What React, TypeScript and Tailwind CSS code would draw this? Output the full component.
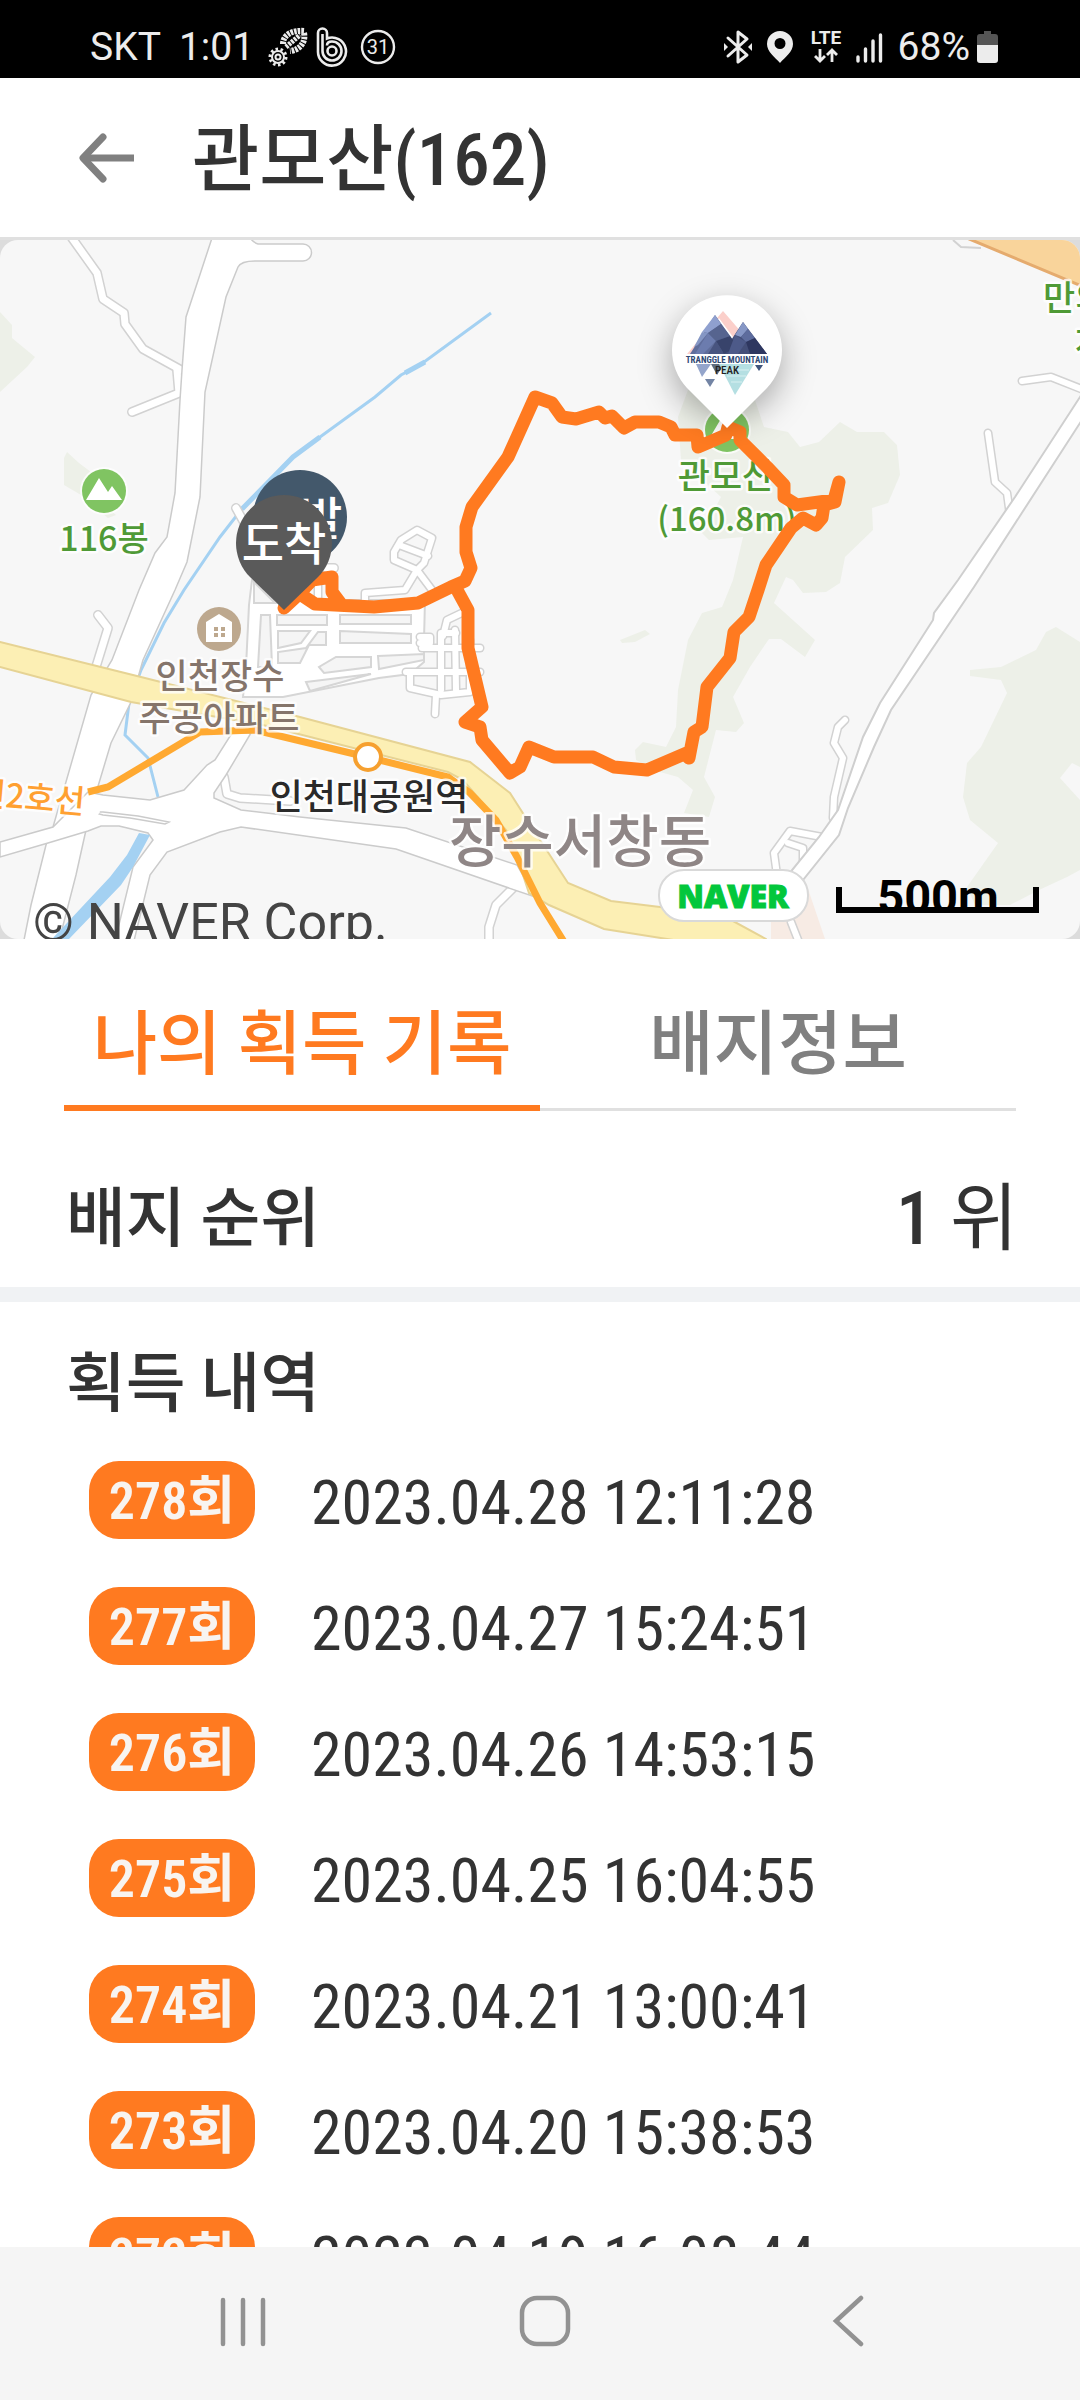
import type { ReactNode } from "react";

type RecordItem = {
  count: number;
  acquiredAt: string;
};

const records: RecordItem[] = [
  { count: 278, acquiredAt: "2023.04.28 12:11:28" },
  { count: 277, acquiredAt: "2023.04.27 15:24:51" },
  { count: 276, acquiredAt: "2023.04.26 14:53:15" },
  { count: 275, acquiredAt: "2023.04.25 16:04:55" },
  { count: 274, acquiredAt: "2023.04.21 13:00:41" },
  { count: 273, acquiredAt: "2023.04.20 15:38:53" },
  { count: 272, acquiredAt: "2023.04.19 16:08:44" },
];

function StatusBar() {
  return (
    <div className="flex h-[78px] shrink-0 items-center justify-between bg-black pt-4 pr-20 pl-[90px] font-['Roboto',sans-serif] text-[39px] leading-none text-[#ececec]">
      <div className="flex items-center">
        <span>SKT</span>
        <span className="ml-[18px]">1:01</span>
        <svg className="ml-3.5 h-10 w-10" viewBox="0 0 40 40" fill="none" stroke="currentColor">
          <circle cx="10" cy="30" r="6" strokeWidth="2" />
          <circle cx="10" cy="30" r="8" strokeWidth="3" strokeDasharray="2.5 2.5" />
          <circle cx="10" cy="30" r="2.5" strokeWidth="2" />
          <path d="M15 17C15 8 24 3 36 4" strokeWidth="6" strokeDasharray="2.6 1" />
          <path d="M36 6C38 15 32 23 22 24" strokeWidth="6" strokeDasharray="2.6 1" />
          <path d="M18 20L32 8" strokeWidth="5" strokeDasharray="2.6 1" />
        </svg>
        <svg className="ml-2 h-10 w-8" viewBox="0 0 32 40" fill="none" stroke="currentColor" strokeWidth="2.6">
          <path d="M2 24V6a4.500 4.500 0 0 1 9 0v5.500A14 14 0 1 1 2 24Z" />
          <path d="M6.500 24V7" />
          <path d="M6.500 24a9.500 9.500 0 1 0 9.500-9.500q-5 0-5 4" />
          <circle cx="16" cy="24" r="4.500" />
        </svg>
        <svg className="ml-3 h-9 w-9" viewBox="0 0 36 36">
          <circle cx="18" cy="18" r="16" fill="none" stroke="currentColor" strokeWidth="2.4" />
          <text x="18" y="25" textAnchor="middle" fontSize="20" fill="currentColor">
            31
          </text>
        </svg>
      </div>
      <div className="flex items-center">
        <svg className="h-9 w-8" viewBox="0 0 32 36" fill="none" stroke="currentColor" strokeWidth="3">
          <path d="M6 9l19 17-9 7V3l9 7L6 27" strokeLinejoin="round" strokeLinecap="round" />
          <path d="M2 14l4 4-4 4zM30 14l-4 4 4 4z" fill="currentColor" stroke="none" />
        </svg>
        <svg className="ml-3 h-9 w-7" viewBox="0 0 28 36" fill="currentColor">
          <path
            fillRule="evenodd"
            d="M14 2A13 13 0 0 0 1 15C1 23 9 28 14 34c5-6 13-11 13-19A13 13 0 0 0 14 2Zm0 7a5.500 5.500 0 1 1 0 11 5.500 5.500 0 0 1 0-11Z"
          />
        </svg>
        <svg className="ml-3.5 h-9 w-9" viewBox="0 0 36 36">
          <text x="18" y="15" textAnchor="middle" fontSize="19" fontWeight="700" fill="currentColor">
            LTE
          </text>
          <path
            d="M12 20v12M7 27l5 5 5-5M24 33V21M19 26l5-5 5 5"
            fill="none"
            stroke="currentColor"
            strokeWidth="2.8"
          />
        </svg>
        <svg className="ml-2.5 h-9 w-8" viewBox="0 0 32 36" stroke="currentColor" strokeWidth="3.4" strokeLinecap="round">
          <path d="M4 28v4M11.500 20v12M19 12v20M26.500 6v26" />
        </svg>
        <span className="ml-3">68%</span>
        <svg className="ml-1.5 h-9 w-6" viewBox="0 0 24 36">
          <path d="M8 2h7v3h4a3 3 0 0 1 3 3v9H1V8a3 3 0 0 1 3-3h4z" fill="#555" />
          <path d="M1 16h21v15a3 3 0 0 1-3 3H4a3 3 0 0 1-3-3z" fill="currentColor" />
        </svg>
      </div>
    </div>
  );
}

function Header() {
  return (
    <header className="flex h-[162px] shrink-0 items-center border-b-[3px] border-[#e0e0e0] bg-white pl-[78px]">
      <button type="button" aria-label="뒤로" className="text-[#808080]">
        <svg className="h-14 w-14" viewBox="0 0 56 56" fill="none" stroke="currentColor" strokeWidth="7">
          <path d="M25 7L5 28l20 21" strokeLinecap="round" strokeLinejoin="round" />
          <path d="M6 28h50" />
        </svg>
      </button>
      <h1 className="ml-[58px] pt-1 text-[73px] leading-[80px] font-medium text-[#333]">관모산(162)</h1>
    </header>
  );
}

const minorRoads = [
  "M72 238L97 273L103 299L124 313L125 324L143 349L181 370",
  "M132 412L179 393L177 370",
  "M98 615L108 628L95 670",
  "M224 777L227 794L240 798L290 801",
  "M513 888L496 905L489 927V945",
  "M236 508L246 526",
  "M326 568L334 568",
];

const blockRoads = [
  "M417 530L432 538L424 563L417 570L394 560V552L401 540Z",
  "M399 545L428 556",
  "M417 570L432 590M417 570L405 590L365 593V602",
  "M422 648H480",
  "M406 672H480",
  "M410 673V688L441 695L470 692V640",
  "M441 690V633H456",
  "M456 690L455 630",
  "M436 695L435 714",
  "M443 636L447 620L468 610",
  "M420 637H430V643H420",
  "M318 575V598",
];

const rightRoads = [
  "M1022 381L1051 377L1084 390",
  "M988 433L995 482L1007 493L1010 515",
  "M845 720L838 727L834 743L843 758L834 797L833 818",
  "M822 837L790 831L774 853L777 875",
  "M788 843L803 848V866L820 845",
  "M791 922L800 945",
];

function Roads({ paths, width }: { paths: string[]; width: number }) {
  return (
    <g fill="none" strokeLinecap="round" strokeLinejoin="round">
      {paths.map((d) => (
        <path key={d} d={d} stroke="#d2d2d2" strokeWidth={width + 3} />
      ))}
      {paths.map((d) => (
        <path key={d} d={d} stroke="#fff" strokeWidth={width} />
      ))}
    </g>
  );
}

type MapLabelProps = {
  x: number;
  y: number;
  size: number;
  color: string;
  anchor?: "start" | "middle" | "end";
  transform?: string;
  children: ReactNode;
};

function MapLabel({ x, y, size, color, anchor = "middle", transform, children }: MapLabelProps) {
  return (
    <text
      x={x}
      y={y}
      fontSize={size}
      fill={color}
      textAnchor={anchor}
      transform={transform}
      stroke="#fff"
      strokeWidth="5"
      strokeOpacity="0.8"
      strokeLinejoin="round"
      paintOrder="stroke"
      fontWeight="500"
    >
      {children}
    </text>
  );
}

function PeakIcon({ x, y }: { x: number; y: number }) {
  return (
    <g transform={`translate(${x} ${y})`}>
      <circle r="24" fill="#fff" fillOpacity="0.7" />
      <circle r="22" fill="#80c462" />
      <path d="M-18 9L-5-13L4 1L8-5L18 9Z" fill="#fff" />
    </g>
  );
}

// Low-poly twin peaks shown inside the badge pin
function BadgeLogo() {
  return (
    <g>
      <path d="M723 311L742 333L736 341L719 318L695 354H687Z" fill="#fbcfca" />
      <path d="M715 315L743 354H690Z" fill="#5f6d9b" />
      <path d="M743 322L767 354H722Z" fill="#434e78" />
      <path d="M715 315L721 324L708 333L702 332Z" fill="#8fa0cf" />
      <path d="M702 332L708 333L698 345L694 347Z" fill="#8496c4" />
      <path d="M708 333L716 341L703 354H695Z" fill="#6c7cae" />
      <path d="M721 324L730 336L716 341L708 333Z" fill="#56648f" />
      <path d="M716 341L724 354H708Z" fill="#48547f" />
      <path d="M730 336L737 346L724 354L716 341Z" fill="#38436b" />
      <path d="M743 322L748 329L741 337L735 335Z" fill="#8697c6" />
      <path d="M748 329L755 338L746 342L741 337Z" fill="#5d6c9d" />
      <path d="M746 342L755 338L767 354H750Z" fill="#2e3760" />
      <path d="M735 335L746 342L738 354H728Z" fill="#4d5a89" />
      <path d="M696 364H711L702 377Z" fill="#94a5cb" />
      <path d="M711 364H724L717 375Z" fill="#5f6d80" />
      <path d="M705 379H715L710 387Z" fill="#7384a4" />
      <path d="M719 364H754L735 395Z" fill="#b4dfe2" />
      <path d="M724 370H749M727 376H746M731 382H742" stroke="#d8f0f1" />
      <path d="M755 365H763L759 371Z" fill="#3f557d" />
      <text x="727" y="363" textAnchor="middle" fontSize="9" fontWeight="700" fill="#2f4a75" className="font-['Roboto_Condensed',sans-serif]">
        TRANGGLE MOUNTAIN
      </text>
      <text x="727" y="374" textAnchor="middle" fontSize="11" fontWeight="500" fill="#222" className="font-['Roboto_Condensed',sans-serif]">
        PEAK
      </text>
    </g>
  );
}

function CourseMap() {
  return (
    <section aria-label="코스 지도" className="shrink-0 bg-[#dcdcdc]">
      <div className="overflow-hidden rounded-[18px] bg-[#f7f7f7]">
        <svg className="block w-full font-['Noto_Sans_CJK_KR',sans-serif]" viewBox="0 240 1080 699">
          <defs>
            <filter id="pin-shadow" x="-60%" y="-60%" width="220%" height="220%">
              <feGaussianBlur stdDeviation="16" />
            </filter>
          </defs>

          {/* forest */}
          <g fill="#edf0e8">
            <path d="M0 312L12 325V338L35 357L27 367L0 392Z" />
            <path d="M67 452L79 463L91 472L98 500L116 515L108 518L81 495L64 485V458Z" />
            <path d="M678 417L688 390L754 397L764 427L788 432L800 447L819 442L840 422L857 432H884L897 445L900 475L888 503L872 508L873 530L845 557L840 583L826 592L803 593L793 580L786 577L774 603L815 640L805 657L781 639H769L750 667L733 697L744 723L736 732L716 730L704 777L715 797L709 817L684 813L693 790L678 777L660 772L636 760L635 750L643 742L666 747L676 727L678 690L688 640L702 613L722 607L733 580L743 537L709 540L702 533L721 497L681 460Z" />
            <path d="M620 640L645 630L650 634L635 642L622 643Z" />
            <path d="M1056 627L1080 642V767L1072 763L1060 778L1080 800V870L1067 877L1039 890L1010 905H975L967 887L998 843L970 820L963 797L967 763L981 747L1007 693L1001 680L970 676V670L1001 667L1036 650L1046 632Z" />
          </g>
          <path d="M771 939V918L806 883L825 939Z" fill="#f7ebe4" />

          {/* rivers */}
          <g fill="none" stroke="#a4d1f2">
            <path d="M491 313L420 365L401 375L375 397L320 437L293 457L241 510L220 537L184 590L164 623L141 670L129 703L125 735L148 758L158 797" strokeWidth="3" />
            <path d="M425 362L405 373M320 437L293 457L242 509" strokeWidth="5" />
          </g>

          {/* trunk roads */}
          <Roads paths={minorRoads} width={7} />
          <g fill="#fff" stroke="#cbcbcb" strokeWidth="1.5">
            <path d="M212 238L186 317L182 370L180 400L175 493L167 537L155 553L139 590L112 660L91 695L53 827L46 845L31 905L23 945H58L76 875L86 830L96 793L111 743L131 702L143 660L175 590L187 562L200 497L205 392L226 297L238 267Q241 261 255 261H303A8 8 0 0 0 303 244H258Q254 243 250 238Z" />
            <path d="M88 792L103 795L150 800L184 790L207 765L215 760L232 733H251L226 775L214 793V798L241 810L300 817L406 828L517 865L535 897L396 849L241 827L220 832L167 852L150 875L133 945H114L133 867L153 840L148 833L119 826H101L88 831L48 843L0 857V842L53 827Z" />
            <path d="M92 812L103 812L138 816L169 822L165 824L130 818L103 815Z" />
          </g>
          <path d="M86 797L95 798L100 812L88 828L56 833Z" fill="#fff" />
          <path d="M139 833L150 835L133 867L121 885L69 939H52L110 877L127 855Z" fill="#a4d1f2" />

          {/* apartment blocks */}
          <path d="M252 580L249 605L246 667L243 697H283L379 678L410 674L424 662L424 640L425 600H290Z" fill="#fff" stroke="#d6d6d6" strokeWidth="2" />
          <g fill="#f5f5f5" stroke="#d6d6d6" strokeWidth="2">
            <path d="M277 615H327V625H277Z" />
            <path d="M340 615H411V624H340Z" />
            <path d="M340 631L411 634V643H340Z" />
            <path d="M278 631H310L301 643L278 648Z" />
            <path d="M318 632H326V645H309L300 663H278V652L306 648Z" />
            <path d="M261 615H270L272 667H258Z" />
            <path d="M336 657H371V667L324 673L319 667Z" />
            <path d="M378 656L424 654V660L379 669Z" />
            <path d="M306 682L371 674L310 691Z" />
            <path d="M254 582V603H275Z" />
          </g>
          <Roads paths={blockRoads} width={6} />

          {/* avenue */}
          <path
            d="M-4 641L0 642L141 677L300 717L470 762L510 793L540 840L568 883L611 901L660 907L733 921L766 939V945H705L604 929L549 905L529 893L517 857L506 830L463 780L448 772L263 725L131 702L0 667L-4 666Z"
            fill="#fcefb4"
            stroke="#e6d394"
            strokeWidth="2"
          />
          <path d="M962 236L1084 287V236Z" fill="#f9d49b" stroke="#e5ab6e" strokeWidth="3" />
          <path d="M953 240L961 247L981 248" fill="none" stroke="#d2d2d2" strokeWidth="2" />

          {/* road on the east side */}
          <Roads paths={rightRoads} width={6} />
          <path d="M1080 397L1015 497L958 580L934 613L933 620L880 703L863 737L838 810L819 837L784 880H803L839 835L848 808L874 747L891 710L974 587L1080 423L1090 410Z" fill="#fff" stroke="#cfcfcf" strokeWidth="2" />

          {/* subway line */}
          <path
            d="M88 792L108 787L200 732L255 730L367 757L448 777L470 793L496 820L517 857L540 903L566 945"
            fill="none"
            stroke="#ffa931"
            strokeWidth="7"
          />
          <circle cx="368" cy="757" r="13" fill="#fff" stroke="#f6a02f" strokeWidth="4" />

          <MapLabel x={104} y={551} size={34} color="#4f9a36">116봉</MapLabel>
          <PeakIcon x={104} y={491} />
          <PeakIcon x={727} y={430} />
          <MapLabel x={726} y={489} size={35} color="#4f9a36">관모산</MapLabel>
          <MapLabel x={727} y={531} size={33} color="#4f9a36">(160.8m)</MapLabel>
          <MapLabel x={1043} y={311} size={35} color="#4f9a36" anchor="start">만의골</MapLabel>
          <MapLabel x={1075} y={354} size={35} color="#4f9a36" anchor="start">차</MapLabel>
          <MapLabel x={220} y={689} size={35} color="#85756b">인천장수</MapLabel>
          <MapLabel x={219} y={731} size={35} color="#85756b">주공아파트</MapLabel>
          <MapLabel x={369} y={810} size={36} color="#2a2a2a">인천대공원역</MapLabel>
          <MapLabel x={580} y={862} size={57} color="#8f8686">장수서창동</MapLabel>
          <MapLabel x={84} y={814} size={33} color="#ffa031" anchor="end" transform="rotate(5 84 814)">인천2호선</MapLabel>
          <circle cx="219" cy="629" r="22" fill="#bda88e" />
          <path d="M206 642V622L219 614L232 622V642Z" fill="#fff" />
          <path d="M214 627h4v4h-4zM221 627h4v4h-4zM214 633h4v4h-4zM221 633h4v4h-4z" fill="#bda88e" />

          {/* recorded track */}
          <path
            d="M284 608L298 595L312 580L332 577V592L341 604M300 594L315 604L374 607L418 603L451 587L465 581L471 568L466 552V527L472 507L508 457L535 397L552 403L562 417L576 419L599 412L605 418L612 416L624 428L635 422H659L671 427L675 435H697L698 447L726 435L728 427L740 432V440L767 467L784 485V497L797 505L834 500L839 482L835 502L824 505L822 518L816 525L803 518L791 528L766 565L758 590L749 617L734 632L730 658L707 687L702 727L694 732L689 758V752L647 770L614 767L593 757H554L529 747L520 767L510 773L482 740L480 727L465 722L482 707L468 648V610L456 588"
            fill="none"
            stroke="#ff7a20"
            strokeWidth="13"
            strokeLinecap="round"
            strokeLinejoin="round"
          />

          {/* departure and arrival pins */}
          <circle cx="300" cy="517" r="47" fill="#43586b" />
          <text x="300" y="535" textAnchor="middle" fontSize="46" fontWeight="500" fill="#fff">출발</text>
          <path d="M284 610L250 577A48 48 0 1 1 318 577Z" fill="#5a5a5a" />
          <text x="284" y="560" textAnchor="middle" fontSize="46" fontWeight="500" fill="#fff">도착</text>

          {/* badge pin */}
          <circle cx="727" cy="362" r="56" fill="#000" fillOpacity="0.3" filter="url(#pin-shadow)" />
          <path d="M727 428L687 388A55 55 0 1 1 767 388Z" fill="#fff" />
          <BadgeLogo />

          <rect x="659" y="870" width="149" height="51" rx="25" fill="#fff" stroke="#d9d9d9" strokeWidth="2" />
          <text x="733" y="908" textAnchor="middle" fontSize="32" fontWeight="800" fill="#03c73c" stroke="#03c73c" className="font-['Open_Sans',sans-serif]">
            NAVER
          </text>
          <text x="938" y="913" textAnchor="middle" fontSize="47" fontWeight="700" fill="#000" className="font-['Roboto',sans-serif]">
            500m
          </text>
          <path d="M839 887V910H1036V887" fill="none" stroke="#000" strokeWidth="6" />
          <text x="33" y="940" fontSize="52" fill="#444" className="font-['Roboto',sans-serif]">
            © NAVER Corp.
          </text>
        </svg>
      </div>
    </section>
  );
}

function Tabs() {
  return (
    <div role="tablist" className="mx-16 grid shrink-0 grid-cols-2 pt-10 text-[70px] leading-[100px] font-medium">
      <button type="button" role="tab" aria-selected="true" className="border-b-[6px] border-[#ff7a20] pt-4 pb-2.5 text-[#ff7a20]">
        나의 획득 기록
      </button>
      <button type="button" role="tab" aria-selected="false" className="border-b-[3px] border-[#e0e0e0] pt-4 pb-[13px] text-[#808080]">
        배지정보
      </button>
    </div>
  );
}

function RecordRow({ count, acquiredAt }: RecordItem) {
  return (
    <li className="flex items-center gap-14">
      <span className="flex h-[78px] w-[166px] items-center justify-center rounded-[30px] bg-[#ff7a20] pt-1 text-[52px] leading-none font-semibold text-[#f8f4f0]">
        {count}회
      </span>
      <time className="pt-1.5 text-[62px] leading-none text-[#333]">{acquiredAt}</time>
    </li>
  );
}

function NavBar() {
  return (
    <nav className="grid h-[153px] shrink-0 grid-cols-3 items-center bg-[#f5f5f5] pr-20 pb-1 pl-[92px] text-[#929292]">
      <button type="button" aria-label="최근 앱" className="flex justify-center">
        <svg className="h-[54px] w-[54px]" viewBox="0 0 54 54" stroke="currentColor" strokeWidth="4.500" strokeLinecap="round">
          <path d="M7 5v44M27 5v44M47 5v44" />
        </svg>
      </button>
      <button type="button" aria-label="홈" className="flex justify-center">
        <svg className="h-[54px] w-[54px]" viewBox="0 0 54 54" fill="none" stroke="currentColor" strokeWidth="4.500">
          <rect x="3" y="3" width="46" height="46" rx="15" />
        </svg>
      </button>
      <button type="button" aria-label="뒤로 가기" className="flex justify-center">
        <svg className="h-[54px] w-[54px]" viewBox="0 0 54 54" fill="none" stroke="currentColor" strokeWidth="4.500" strokeLinecap="round">
          <path d="M39 3L14 26l25 23" />
        </svg>
      </button>
    </nav>
  );
}

export default function App() {
  return (
    <div className="flex h-screen flex-col overflow-hidden bg-white font-['Roboto_Condensed','Noto_Sans_CJK_KR',sans-serif] text-[#333]">
      <StatusBar />
      <Header />
      <main className="flex min-h-0 flex-1 flex-col overflow-hidden">
        <CourseMap />
        <Tabs />
        <section className="flex h-[176px] shrink-0 items-center justify-between pt-10 pr-[62px] pl-[66px]">
          <h2 className="text-[65px] leading-[80px] font-medium">배지 순위</h2>
          <p className="text-[74px] leading-[80px]">
            <span className="font-medium">1</span> 위
          </p>
        </section>
        <div className="h-[15px] shrink-0 bg-[#f0f2f4]" />
        <section className="shrink-0 pt-[42px] pl-[66px]">
          <h2 className="text-[65px] leading-[80px] font-medium">획득 내역</h2>
          <ul className="mt-[37px] flex flex-col gap-12 pl-[23px]">
            {records.map((record) => (
              <RecordRow key={record.count} {...record} />
            ))}
          </ul>
        </section>
      </main>
      <NavBar />
    </div>
  );
}
